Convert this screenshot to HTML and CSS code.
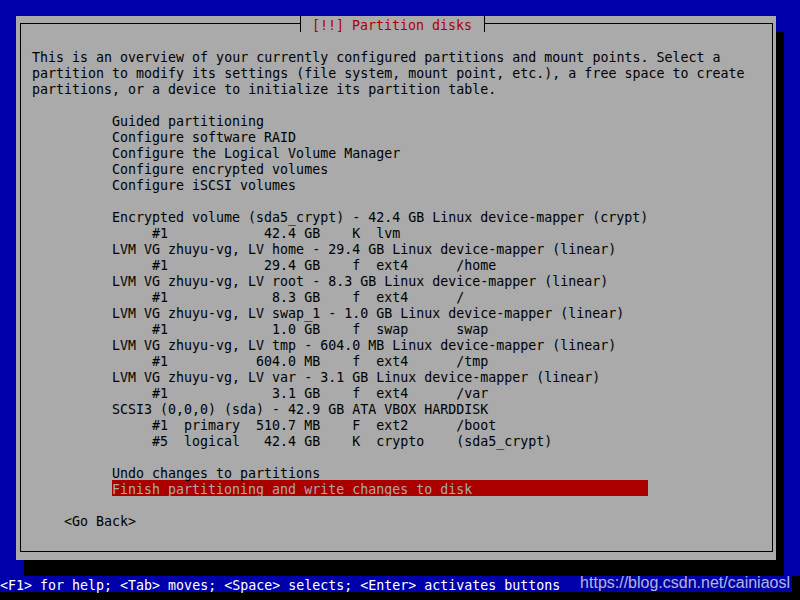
FILE: index.html
```html
<!DOCTYPE html>
<html lang="en">
<head>
  <meta charset="UTF-8">
  <title>[!!] Partition disks</title>
  <link rel="stylesheet" href="styles.css">
</head>
<body>
  <!-- installer screen -->
  <div class="screen">
    <div class="dialog">
      <div class="frame">
        <h1 class="title">[!!] Partition disks</h1>

        <div class="intro">
          <p class="line">This is an overview of your currently configured partitions and mount points. Select a</p>
          <p class="line">partition to modify its settings (file system, mount point, etc.), a free space to create</p>
          <p class="line">partitions, or a device to initialize its partition table.</p>
        </div>

        <ul class="menu">
          <li class="line">Guided partitioning</li>
          <li class="line">Configure software RAID</li>
          <li class="line">Configure the Logical Volume Manager</li>
          <li class="line">Configure encrypted volumes</li>
          <li class="line">Configure iSCSI volumes</li>
        </ul>

        <ul class="menu">
          <li class="line">Encrypted volume (sda5_crypt) - 42.4 GB Linux device-mapper (crypt)</li>
          <li class="line">     #1            42.4 GB    K  lvm</li>
          <li class="line">LVM VG zhuyu-vg, LV home - 29.4 GB Linux device-mapper (linear)</li>
          <li class="line">     #1            29.4 GB    f  ext4      /home</li>
          <li class="line">LVM VG zhuyu-vg, LV root - 8.3 GB Linux device-mapper (linear)</li>
          <li class="line">     #1             8.3 GB    f  ext4      /</li>
          <li class="line">LVM VG zhuyu-vg, LV swap_1 - 1.0 GB Linux device-mapper (linear)</li>
          <li class="line">     #1             1.0 GB    f  swap      swap</li>
          <li class="line">LVM VG zhuyu-vg, LV tmp - 604.0 MB Linux device-mapper (linear)</li>
          <li class="line">     #1           604.0 MB    f  ext4      /tmp</li>
          <li class="line">LVM VG zhuyu-vg, LV var - 3.1 GB Linux device-mapper (linear)</li>
          <li class="line">     #1             3.1 GB    f  ext4      /var</li>
          <li class="line">SCSI3 (0,0,0) (sda) - 42.9 GB ATA VBOX HARDDISK</li>
          <li class="line">     #1  primary  510.7 MB    F  ext2      /boot</li>
          <li class="line">     #5  logical   42.4 GB    K  crypto    (sda5_crypt)</li>
        </ul>

        <ul class="menu">
          <li class="line">Undo changes to partitions</li>
          <li class="line selected">Finish partitioning and write changes to disk</li>
        </ul>

        <div class="buttons">
          <span class="line">&lt;Go Back&gt;</span>
        </div>
      </div>
    </div>
  </div>

  <div class="statusbar">
    <span class="line">&lt;F1&gt; for help; &lt;Tab&gt; moves; &lt;Space&gt; selects; &lt;Enter&gt; activates buttons</span>
    <span class="watermark">https://blog.csdn.net/cainiaosl</span>
  </div>
</body>
</html>
```

FILE: styles.css
```css
* {
  margin: 0;
  padding: 0;
  box-sizing: border-box;
}
body {
  width: 800px;
  height: 600px;
  overflow: hidden;
  background-color: #000;
  color: #000;
  font-family: "DejaVu Sans Mono", monospace;
  font-size: 13.3px;
}

/* one text row of the console = 8x16 cells */
.line {
  display: block;
  height: 16px;
  line-height: 19px;
  white-space: pre;
}

.screen {
  height: 576px;
  padding: 16px 0 0 16px;
  background-color: #0000aa;
}

.dialog {
  width: 760px;
  height: 544px;
  padding: 7px 0 0 4px;
  background-color: #aaaaaa;
  box-shadow: 8px 16px 0 #000;
}

.frame {
  position: relative;
  width: 753px;
  height: 529px;
  padding: 24px 0 0 11px;
  border: 1px solid #000;
}

/* title sits on the top border */
.title {
  position: absolute;
  left: 279px;
  top: -8px;
  height: 16px;
  padding: 0 12px 0 11px;
  border-left: 1px solid #000;
  border-right: 1px solid #000;
  background-color: #aaaaaa;
  color: #aa0000;
  font-size: 13.3px;
  font-weight: normal;
  line-height: 19px;
  white-space: pre;
  overflow: hidden;
}

.intro {
  margin-bottom: 16px;
}

.menu {
  list-style: none;
  margin: 0 0 16px 80px;
}

.selected {
  width: 536px;
  background-color: #aa0000;
  color: #aaaaaa;
}

.buttons {
  padding-left: 32px;
}

.statusbar {
  display: flex;
  justify-content: space-between;
  width: 792px;
  height: 16px;
  padding-right: 2px;
  background-color: #0000aa;
  color: #fff;
}

.watermark {
  font-family: "Liberation Sans", Arial, sans-serif;
  font-size: 16px;
  line-height: 14px;
  color: rgba(225, 228, 255, 0.8);
  text-shadow: 1px 1px 1px rgba(0, 0, 0, 0.25);
}
```
